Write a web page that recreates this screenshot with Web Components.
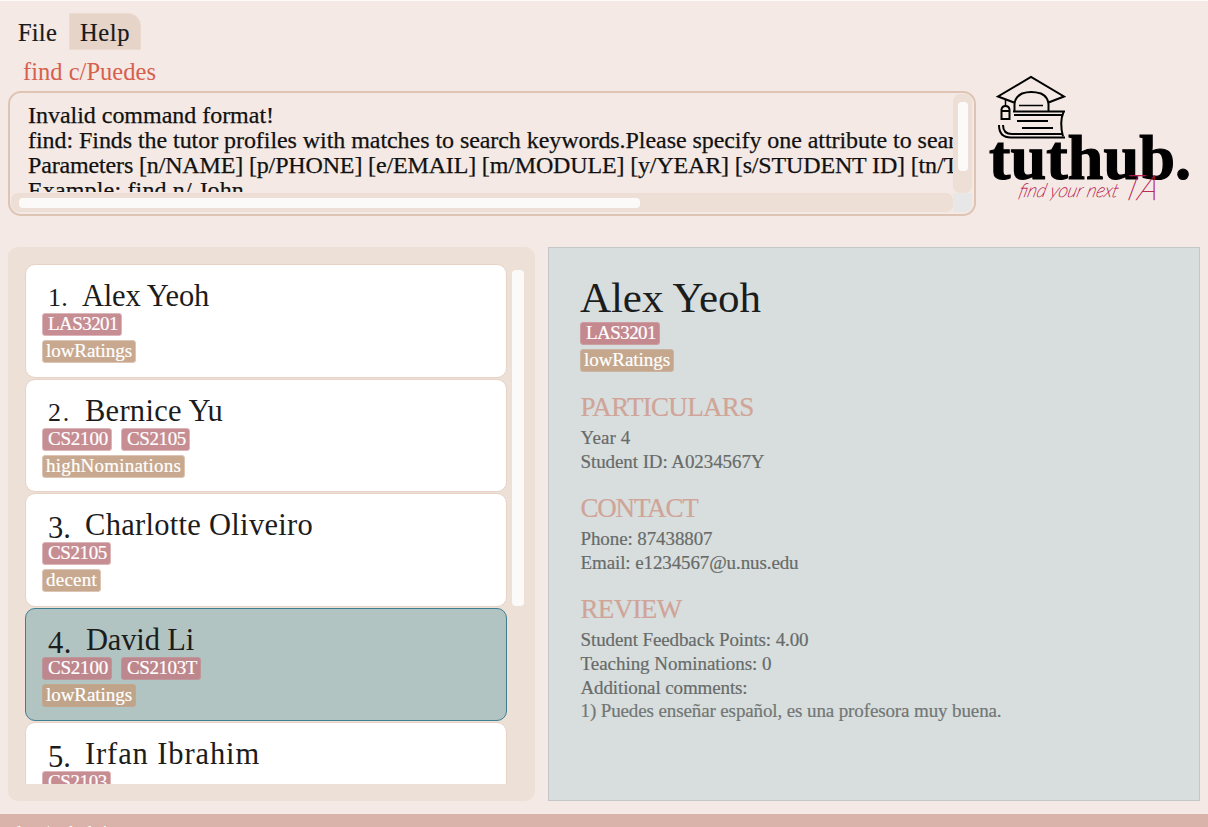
<!DOCTYPE html>
<html lang="en">
<head>
<meta charset="utf-8">
<title>tuthub</title>
<style>
html, body { margin: 0; height: 100%; overflow: hidden; background: #f4e9e4; }
body { font-family: "Liberation Serif", serif; color: #1c1c1c; }
</style>
</head>
<body>
<tut-app></tut-app>
<script>
const define = (name, html, setup) => {
  const t = document.createElement('template');
  t.innerHTML = html;
  customElements.define(name, class extends HTMLElement {
    connectedCallback() {
      if (this.shadowRoot) return;
      this.attachShadow({ mode: 'open' }).appendChild(t.content.cloneNode(true));
      if (setup) setup(this, this.shadowRoot);
    }
  });
};

/* A single line of text tracked to a given width. */
define('fit-text', `<style>:host{display:inline-block;white-space:pre}</style><slot></slot>`, (el) => {
  const w = +el.getAttribute('w');
  const n = el.textContent.length;
  const now = el.getBoundingClientRect().width;
  if (w && n && now) el.style.letterSpacing = ((w - now) / n) + 'px';
});

define('menu-bar', `<style>
:host{display:flex;height:37px;padding:12px 0 0 8px;font-size:24.500px;line-height:39px;color:#1a1a1a;-webkit-text-stroke:.2px}
</style><slot></slot>`);
define('menu-item', `<style>
:host{display:block;box-sizing:border-box;height:37px;padding:0 11px 0 10px}
:host([active]){background:#e6d4c8;border:1px solid #eadad0;border-radius:0 13px 0 0;margin-left:1px;padding:0 10px;line-height:37px}
</style><slot></slot>`);

define('command-box', `<style>
:host{display:block;height:41px;padding:1px 0 0 23px;box-sizing:border-box;font-size:24.500px;line-height:41px;color:#d6604d}
</style><slot></slot>`);

define('result-display', `<style>
:host{display:grid;box-sizing:border-box;width:968px;height:125px;margin-left:8px;border:2px solid #dec4b4;border-radius:13px;
 grid-template:99px 19px / 942px 19px;padding:1px 2px 2px 1px;overflow:hidden}
.text{overflow:hidden;padding:9px 0 0 17px;font-size:24px;line-height:25px;height:89px;color:#111;-webkit-text-stroke:.25px}
.v,.h{background:#eddfd5;border-radius:7px}
.v{padding:8px 5px 0;box-sizing:border-box}
.v i{display:block;width:10px;height:69px;border-radius:4px;background:#fcfaf8}
.h{padding:5px 0 0 8px;box-sizing:border-box}
.h i{display:block;width:621px;height:10px;border-radius:4px;background:#fcfaf8}
.c{background:#e8e7e7;border-radius:0 0 8px 0}
</style>
<div class="text"><slot></slot></div><div class="v"><i></i></div><div class="h"><i></i></div><div class="c"></div>`);

define('tut-logo', `<style>:host{display:block;width:208px;height:140px}svg{display:block}</style>
<svg width="208" height="140" viewBox="984 74 208 140" fill="none" stroke="#000">
<g stroke-width="2" stroke-linejoin="miter">
<path d="M1014 102.5 L998 96.5 L1031 77 L1064 96.5 L1048.500 102.500"/>
<path d="M1014.500 111 V104 Q1015 97 1022 93.500 Q1031 90.500 1041 93.500 Q1048 97 1048.500 104 V111"/>
<path d="M1019 105.500 H1043" stroke-width="1.500"/>
<path d="M1005.500 99.500 V106" stroke-width="1.500"/>
<path d="M1001.500 119 V109.500 Q1002 106 1005.500 106 Q1009 106 1009.500 109.500 V119 Z M1001.500 111 H1009.500"/>
<path d="M1013 111.500 H1065 M1014 115 H1063"/>
<path d="M1063.500 112 C1060.500 119 1060.500 127 1063 136.500"/>
<path d="M1017 121 H1048 M1022 128 H1053"/>
<path d="M1003 125 Q1003 134 1012 134 H1062 M999 125 Q999 137.500 1011 137.500 H1065"/>
</g>
<text x="989" y="178.500" font-family="Liberation Serif, serif" font-weight="700" font-size="63" fill="#000" stroke-width="1.200" textLength="202" lengthAdjust="spacingAndGlyphs">tuthub.</text>
<text transform="translate(1018 197) skewX(-14)" font-family="Lato, sans-serif" font-weight="100" font-style="italic" font-size="19" fill="#b8184c" stroke="#b8184c" stroke-width=".45" textLength="139" lengthAdjust="spacingAndGlyphs">find your next <tspan font-size="35" dy="3">TA</tspan></text>
</svg>`);

define('tag-chip', `<style>
:host{display:block;box-sizing:border-box;height:23px;border:1px solid var(--chip-edge,#dcb6b9);border-radius:3px;background:var(--chip-bg,#c68d93);color:#fff;font-size:19px;line-height:20px;padding:0 3px 0 5px;-webkit-text-stroke:.2px}
:host([kind=rating]){background:var(--rate-bg,#c8a98f);border-color:var(--rate-edge,#dcc5b4);padding:0 3px}
</style><slot></slot>`);
define('tag-rows', `<style>
:host{display:grid;grid-auto-rows:23px;gap:4px;justify-items:start}
div{display:flex;gap:9px}
</style><div><slot></slot></div><div><slot name="rating"></slot></div>`);

define('tutor-card', `<style>
:host{display:block;box-sizing:border-box;flex:none;height:113.500px;border:1px solid #e6d3c6;border-radius:10px;background:#fff;padding:14px 0 0 16px}
:host([selected]){background:#b1c4c1;border-color:#3e7f92;--chip-bg:#be878d;--chip-edge:#bd9699;--rate-bg:#bfa489;--rate-edge:#c4a68f}
.head{display:flex;height:34px;line-height:34px;font-size:30.500px;padding-left:6px;color:#1c1c1c}
.no{width:var(--no,34px)}
</style><div class="head"><span class="no"><slot name="no"></slot></span><slot name="name"></slot></div><slot></slot>`);

define('tutor-list', `<style>
:host{display:flex;box-sizing:border-box;width:527px;height:554px;background:#ede0d6;border-radius:10px;padding:17px 11px 17px 17px;gap:5px}
.view{width:482px;height:520px;overflow:hidden;display:flex;flex-direction:column;gap:1px;padding-top:.4px;box-sizing:border-box}
.bar{width:12px;height:336px;margin-top:6px;border-radius:4px;background:#fcfaf8}
</style><div class="view"><slot></slot></div><div class="bar"></div>`);

define('tutor-details', `<style>
:host{display:block;box-sizing:border-box;width:652px;height:554px;border:1px solid #c3c7c7;background:#d8dedd;padding:26px 0 0 31px;--chip-bg:#c3898f;--chip-edge:#cb9da1;--rate-bg:#c4a78d;--rate-edge:#cbb5a2}
.name{height:48px;line-height:48px;font-size:43px;color:#1b1d1d}
</style><div class="name"><slot name="name"></slot></div><slot></slot>`);
define('detail-section', `<style>
:host{display:block;font-size:19px;line-height:24px;color:#676b6a;padding-left:.5px;-webkit-text-stroke:.2px}
.title{font-size:27px;line-height:30px;height:30px;color:#d0a498}
.body{display:flex;flex-direction:column;align-items:flex-start;padding:4px 0 19px}
:host([first]){margin-top:20px}
</style><div class="title"><slot name="title"></slot></div><div class="body"><slot></slot></div>`);

define('status-bar', `<style>
:host{display:block;flex:none;height:13px;overflow:hidden;background:#d9b3aa;color:#fff;font-size:19px;line-height:24px;padding-left:12px}
div{padding-top:7px}
</style><div><slot></slot></div>`);

define('tut-app', `<style>
:host{display:flex;flex-direction:column;box-sizing:border-box;width:1208px;height:827px;border-top:1px solid #fdfbfa;background:#f4e9e4}
.top{display:flex;height:166px;align-items:flex-start}
.left{width:976px;flex:none}
tut-logo{margin:24px 0 0 8px}
.main{display:flex;gap:13px;padding:31px 0 13px 8px}
</style>
<menu-bar><menu-item><fit-text w="39">File</fit-text></menu-item><menu-item active><fit-text w="50">Help</fit-text></menu-item></menu-bar>
<div class="top"><div class="left">
<command-box><fit-text w="133">find c/Puedes</fit-text></command-box>
<result-display>
<fit-text w="246">Invalid command format!</fit-text><br>
<fit-text w="928">find: Finds the tutor profiles with matches to search keywords.Please specify one attribute to sear</fit-text><br>
<fit-text w="930">Parameters [n/NAME] [p/PHONE] [e/EMAIL] [m/MODULE] [y/YEAR] [s/STUDENT ID] [tn/T</fit-text><br>
<fit-text w="216">Example: find n/ John</fit-text>
</result-display></div>
<tut-logo></tut-logo></div>
<div class="main">
<tutor-list>
<tutor-card style="--no:34px"><fit-text slot="no" w="20" style="font-size:26px">1.</fit-text><fit-text slot="name" w="127">Alex Yeoh</fit-text>
<tag-rows><tag-chip><fit-text w="70">LAS3201</fit-text></tag-chip><tag-chip slot="rating" kind="rating"><fit-text w="86">lowRatings</fit-text></tag-chip></tag-rows></tutor-card>
<tutor-card style="--no:37px"><fit-text slot="no" w="23" style="font-size:26px">2.</fit-text><fit-text slot="name" w="138">Bernice Yu</fit-text>
<tag-rows><tag-chip><fit-text w="60">CS2100</fit-text></tag-chip><tag-chip><fit-text w="59">CS2105</fit-text></tag-chip><tag-chip slot="rating" kind="rating"><fit-text w="135">highNominations</fit-text></tag-chip></tag-rows></tutor-card>
<tutor-card style="--no:37px"><fit-text slot="no" w="23" style="position:relative;top:3px">3.</fit-text><fit-text slot="name" w="228">Charlotte Oliveiro</fit-text>
<tag-rows><tag-chip><fit-text w="59">CS2105</fit-text></tag-chip><tag-chip slot="rating" kind="rating"><fit-text w="51">decent</fit-text></tag-chip></tag-rows></tutor-card>
<tutor-card selected style="--no:38px"><fit-text slot="no" w="24" style="position:relative;top:3px">4.</fit-text><fit-text slot="name" w="108">David Li</fit-text>
<tag-rows><tag-chip><fit-text w="60">CS2100</fit-text></tag-chip><tag-chip><fit-text w="70">CS2103T</fit-text></tag-chip><tag-chip slot="rating" kind="rating"><fit-text w="86">lowRatings</fit-text></tag-chip></tag-rows></tutor-card>
<tutor-card style="--no:37px"><fit-text slot="no" w="23" style="position:relative;top:3px">5.</fit-text><fit-text slot="name" w="175">Irfan Ibrahim</fit-text>
<tag-rows><tag-chip><fit-text w="59">CS2103</fit-text></tag-chip></tag-rows></tutor-card>
</tutor-list>
<tutor-details><fit-text slot="name" w="181">Alex Yeoh</fit-text>
<tag-rows><tag-chip><fit-text w="70">LAS3201</fit-text></tag-chip><tag-chip slot="rating" kind="rating"><fit-text w="86">lowRatings</fit-text></tag-chip></tag-rows>
<detail-section first><fit-text slot="title" w="173">PARTICULARS</fit-text>
<fit-text w="50">Year 4</fit-text><fit-text w="184">Student ID: A0234567Y</fit-text></detail-section>
<detail-section><fit-text slot="title" w="117">CONTACT</fit-text>
<fit-text w="132">Phone: 87438807</fit-text><fit-text w="218">Email: e1234567@u.nus.edu</fit-text></detail-section>
<detail-section><fit-text slot="title" w="101">REVIEW</fit-text>
<fit-text w="228">Student Feedback Points: 4.00</fit-text><fit-text w="191">Teaching Nominations: 0</fit-text><fit-text w="167">Additional comments:</fit-text><fit-text w="421" style="line-height:22px;color:#727675">1) Puedes enseñar español, es una profesora muy buena.</fit-text></detail-section>
</tutor-details>
</div>
<status-bar>data/tuthub.json</status-bar>`);
</script>
</body>
</html>
